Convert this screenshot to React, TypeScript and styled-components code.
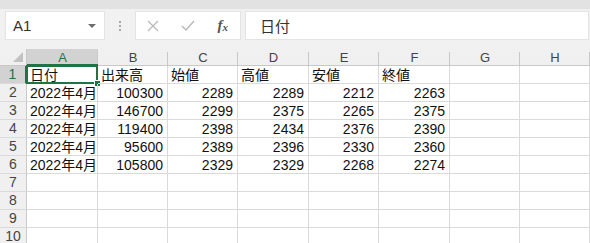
import React from 'react';
import styled, { createGlobalStyle } from 'styled-components';

const Global = createGlobalStyle`
  html, body {
    margin: 0;
    padding: 0;
    background: #ffffff;
    overflow: hidden;
  }
  body {
    font-family: 'Liberation Sans', 'Noto Sans CJK JP', sans-serif;
  }
`;

const Page = styled.div`
  width: 590px;
  height: 243px;
  overflow: hidden;
  background: #ffffff;
`;

const Toolbar = styled.div`
  height: 49px;
  box-sizing: border-box;
  background: #f1f1f1;
  border-top: 9px solid #e2e2e2;
  padding: 2px 1px 0 5px;
  display: flex;
  align-items: flex-start;
`;

const Box = styled.div<{ $w?: number }>`
  height: 29px;
  box-sizing: border-box;
  background: #ffffff;
  border: 1px solid #e4e4e4;
  display: flex;
  align-items: center;
  ${(p) => (p.$w ? `width: ${p.$w}px;` : 'flex: 1;')}
`;

const NameText = styled.span`
  flex: 1;
  padding-left: 7px;
  font-size: 15px;
  color: #333333;
`;

const Caret = styled.span`
  width: 0;
  height: 0;
  margin-right: 8px;
  border-left: 4px solid transparent;
  border-right: 4px solid transparent;
  border-top: 4px solid #6d6d6d;
`;

const Dots = styled.div`
  width: 30px;
  height: 29px;
  display: flex;
  flex-direction: column;
  align-items: center;
  justify-content: center;
  gap: 2px;
  > i {
    width: 2px;
    height: 2px;
    background: #a8a8a8;
  }
`;

const IconBtn = styled.div`
  width: 36px;
  display: flex;
  justify-content: center;
  align-items: center;
`;

const Fx = styled.span`
  font-family: 'Liberation Serif', serif;
  font-style: italic;
  font-weight: bold;
  font-size: 15px;
  color: #555555;
  > sub {
    font-size: 11px;
    vertical-align: -1px;
  }
`;

const Gap = styled.div`
  width: 4px;
`;

const FormulaText = styled.span`
  padding-left: 14px;
  font-size: 15px;
  color: #333333;
`;

const Sheet = styled.div`
  display: grid;
  grid-template-columns: 27px 71px 70px 70px 71px 70px 71px 70px 70px;
  grid-auto-rows: 18px;
  grid-template-rows: 17px;
`;

const Corner = styled.div`
  position: relative;
  background: #f0f0f0;
  border-right: 1px solid #c8c8c8;
  border-bottom: 1px solid #c8c8c8;
  box-sizing: border-box;
  &::after {
    content: '';
    position: absolute;
    right: 3px;
    bottom: 3px;
    width: 0;
    height: 0;
    border-left: 10px solid transparent;
    border-bottom: 10px solid #c2c2c2;
  }
`;

const ColHead = styled.div<{ $active?: boolean }>`
  box-sizing: border-box;
  background: ${(p) => (p.$active ? '#d2d2d2' : '#f0f0f0')};
  border-bottom: ${(p) => (p.$active ? '2px solid #217346' : '1px solid #c8c8c8')};
  color: ${(p) => (p.$active ? '#217346' : '#444444')};
  font-size: 13px;
  line-height: 11px;
  display: flex;
  align-items: flex-end;
  justify-content: center;
  padding-bottom: ${(p) => (p.$active ? '1px' : '2px')};
  position: relative;
  &::after {
    content: '';
    position: absolute;
    right: 0;
    top: 3px;
    bottom: 0;
    width: 1px;
    background: #c8c8c8;
  }
`;

const RowHead = styled.div<{ $active?: boolean }>`
  box-sizing: border-box;
  background: ${(p) => (p.$active ? '#d2d2d2' : '#f0f0f0')};
  border-right: ${(p) => (p.$active ? '2px solid #217346' : '1px solid #c8c8c8')};
  border-bottom: 1px solid #dadada;
  color: ${(p) => (p.$active ? '#217346' : '#444444')};
  font-size: 14px;
  line-height: 15px;
  display: flex;
  align-items: center;
  justify-content: center;
`;

const Cell = styled.div<{ $num?: boolean }>`
  position: relative;
  box-sizing: border-box;
  border-right: 1px solid #dadada;
  border-bottom: 1px solid #dadada;
  font-size: 14px;
  color: #111111;
  line-height: 18px;
  padding: 0 ${(p) => (p.$num ? '4px' : '0')} 0 ${(p) => (p.$num ? '0' : '3px')};
  text-align: ${(p) => (p.$num ? 'right' : 'left')};
  white-space: nowrap;
`;

const Selection = styled.div`
  position: absolute;
  left: -1px;
  top: -1px;
  right: -1px;
  bottom: -1px;
  border: 2px solid #217346;
  pointer-events: none;
  &::after {
    content: '';
    position: absolute;
    right: -5px;
    bottom: -5px;
    width: 5px;
    height: 5px;
    background: #217346;
    border: 1px solid #ffffff;
  }
`;

const cols = ['A', 'B', 'C', 'D', 'E', 'F', 'G', 'H'];

const header = ['日付', '出来高', '始値', '高値', '安値', '終値'];

const data: (string | number)[][] = [
  ['2022年4月', 100300, 2289, 2289, 2212, 2263],
  ['2022年4月', 146700, 2299, 2375, 2265, 2375],
  ['2022年4月', 119400, 2398, 2434, 2376, 2390],
  ['2022年4月', 95600, 2389, 2396, 2330, 2360],
  ['2022年4月', 105800, 2329, 2329, 2268, 2274],
];

export default function App() {
  const rows: (string | number)[][] = [header, ...data, [], [], [], []];
  return (
    <Page>
      <Global />
      <Toolbar>
        <Box $w={100}>
          <NameText>A1</NameText>
          <Caret />
        </Box>
        <Dots>
          <i />
          <i />
          <i />
        </Dots>
        <Box $w={106}>
          <IconBtn>
            <svg width="12" height="12" viewBox="0 0 12 12">
              <path d="M1 1 L11 11 M11 1 L1 11" stroke="#b9b9b9" strokeWidth="1.3" fill="none" />
            </svg>
          </IconBtn>
          <IconBtn>
            <svg width="14" height="12" viewBox="0 0 14 12">
              <path d="M1 6 L5 10 L13 1" stroke="#b9b9b9" strokeWidth="1.5" fill="none" />
            </svg>
          </IconBtn>
          <IconBtn>
            <Fx>
              f<sub>x</sub>
            </Fx>
          </IconBtn>
        </Box>
        <Gap />
        <Box>
          <FormulaText>日付</FormulaText>
        </Box>
      </Toolbar>
      <Sheet>
        <Corner />
        {cols.map((c) => (
          <ColHead key={c} $active={c === 'A'}>
            {c}
          </ColHead>
        ))}
        {rows.map((r, i) => (
          <React.Fragment key={i}>
            <RowHead $active={i === 0}>{i + 1}</RowHead>
            {cols.map((c, j) => {
              const v = r[j];
              return (
                <Cell key={c} $num={typeof v === 'number'}>
                  {v}
                  {i === 0 && j === 0 && <Selection />}
                </Cell>
              );
            })}
          </React.Fragment>
        ))}
      </Sheet>
    </Page>
  );
}
